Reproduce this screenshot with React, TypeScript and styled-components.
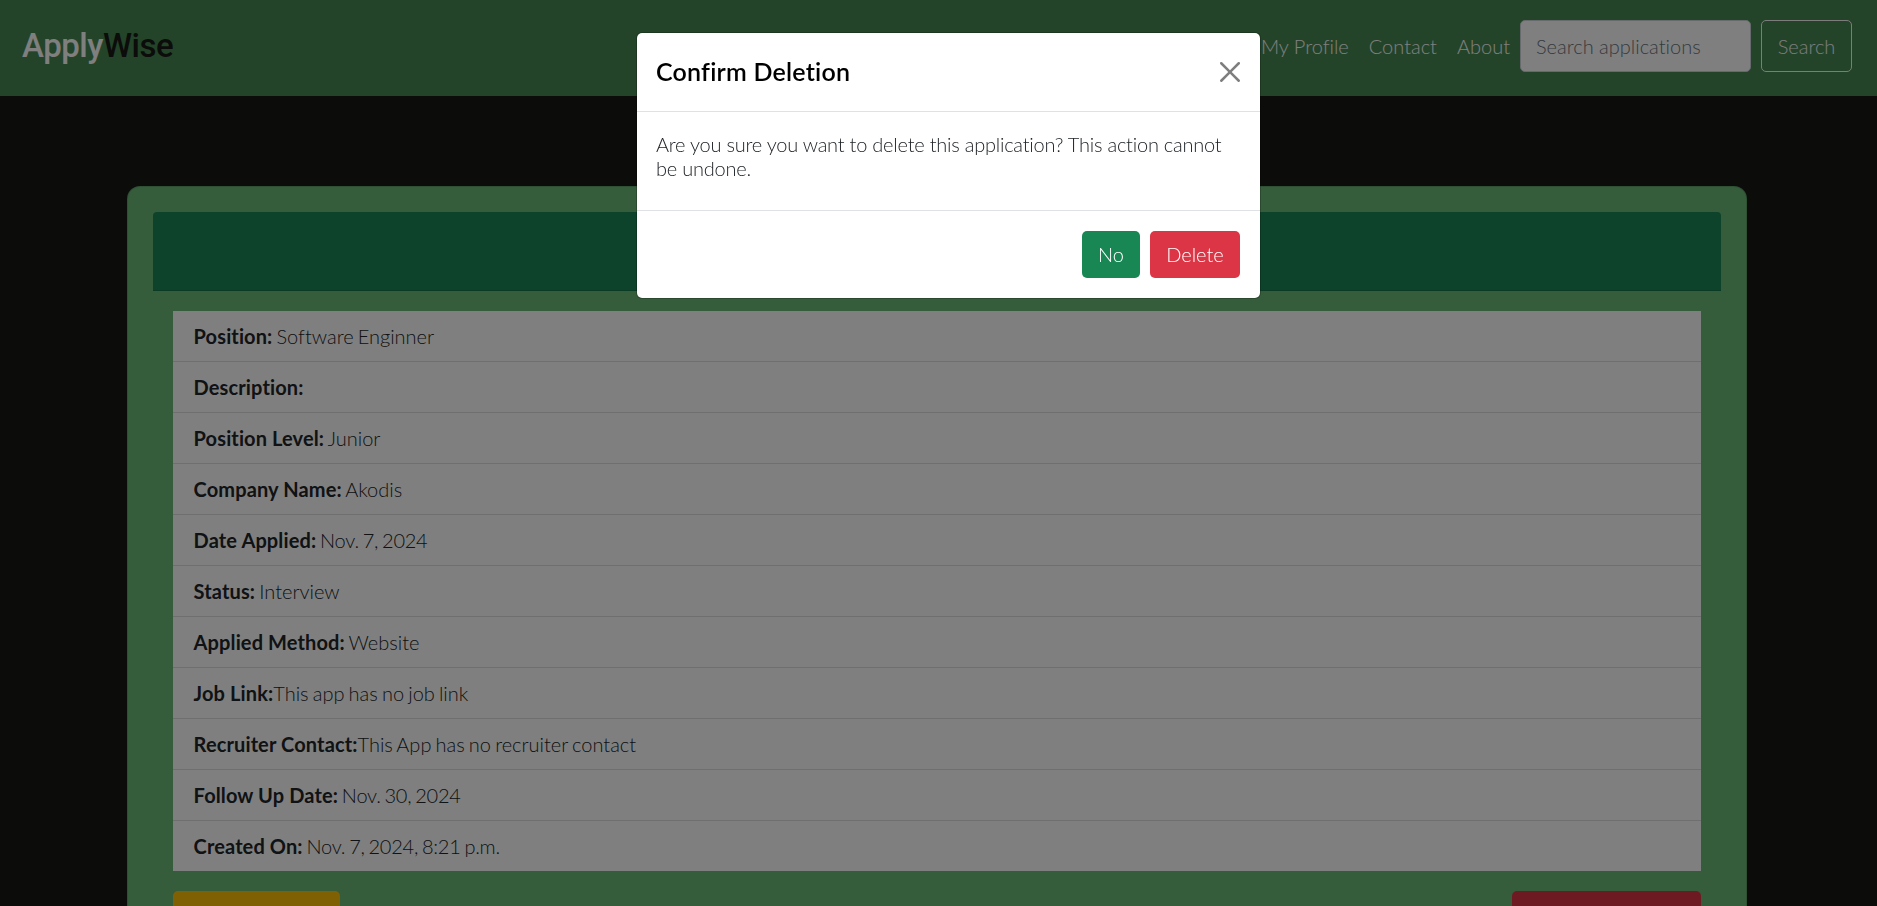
import React from 'react';
import styled, { createGlobalStyle } from 'styled-components';

const GlobalStyle = createGlobalStyle`
  *, *::before, *::after { box-sizing: border-box; }
  html, body { margin: 0; height: 100%; overflow: hidden; }
  body {
    background: #181815;
    color: #212529;
    font: 300 20px/1.5 Lato, "Open Sans", sans-serif;
    font-variant-ligatures: none;
  }
  button, input { font: inherit; margin: 0; }
`;

const Page = styled.div`
  height: 906px;
  overflow: hidden;
`;

const Navbar = styled.nav`
  display: flex;
  align-items: flex-start;
  justify-content: space-between;
  height: 96px;
  padding: 20px 25px 0 22px;
  background: #468852;
`;

const Brand = styled.a`
  display: block;
  font: 500 33px/52px Roboto, sans-serif;
  letter-spacing: -0.45px;
  color: #181815;
`;

const BrandLight = styled.span`
  color: #fff;
`;

const NavRight = styled.div`
  display: flex;
`;

const NavLink = styled.a`
  padding: 11px 10px 10px;
  color: #fff;
  white-space: nowrap;
`;

const SearchInput = styled.input`
  width: 231px;
  height: 52px;
  padding: 7px 15px;
  border: 1px solid #ced4da;
  border-radius: 5px;
  background: #fff;
  color: #212529;
  &::placeholder { color: #6c757d; opacity: 1; }
`;

const SearchButton = styled.button`
  width: 91px;
  height: 52px;
  margin-left: 10px;
  padding: 0;
  border: 1px solid #f8f9fa;
  border-radius: 5px;
  background: transparent;
  color: #f8f9fa;
`;

const Card = styled.main`
  width: 1620px;
  height: 800px;
  margin: 90px 0 0 127px;
  padding: 25px;
  border: 1px solid rgba(0, 0, 0, 0.125);
  border-radius: 13px;
  background: #6ab876;
`;

const CardHeader = styled.header`
  height: 79px;
  border-bottom: 1px solid rgba(0, 0, 0, 0.125);
  border-radius: 4px 4px 0 0;
  background: #198754;
`;

const CardBody = styled.div`
  padding: 20px;
`;

const DetailList = styled.ul`
  margin: 0 0 20px;
  padding: 0;
  list-style: none;
  background: #fff;
`;

const DetailRow = styled.li`
  height: 51px;
  padding: 10px 20.6px;
  border-bottom: 1px solid rgba(0, 0, 0, 0.125);
  white-space: pre;
  &:last-child { height: 50px; border-bottom: 0; }
`;

const Label = styled.strong`
  font-weight: 700;
  letter-spacing: 0.12px;
`;

const Value = styled.span<{ $numeric: boolean }>`
  letter-spacing: ${(p) => (p.$numeric ? '-0.25px' : '0')};
  word-spacing: -1.3px;
`;

const Actions = styled.div`
  display: flex;
  justify-content: space-between;
`;

const ActionButton = styled.button<{ $tone: string; $width: number }>`
  width: ${(p) => p.$width}px;
  height: 47px;
  border: 0;
  border-radius: 5px;
  background: ${(p) => p.$tone};
`;

const Backdrop = styled.div`
  position: fixed;
  inset: 0;
  background: rgba(0, 0, 0, 0.5);
`;

const Dialog = styled.section`
  position: absolute;
  top: 32px;
  left: 636px;
  width: 625px;
  border: 1px solid rgba(0, 0, 0, 0.2);
  border-radius: 6px;
  background: #fff;
  background-clip: padding-box;
  color: #000;
`;

const DialogHeader = styled.header`
  display: flex;
  align-items: center;
  justify-content: space-between;
  height: 79px;
  padding: 0 20px 0 19px;
  border-bottom: 1px solid #dee2e6;
`;

const DialogTitle = styled.h5`
  margin: 0;
  font-size: 25px;
  font-weight: 600;
  letter-spacing: 0.22px;
`;

const CloseButton = styled.button`
  display: flex;
  padding: 0;
  border: 0;
  background: transparent;
  opacity: 0.5;
`;

const DialogBody = styled.p`
  margin: 0;
  height: 98px;
  padding: 20px 20px 20px 19px;
  letter-spacing: -0.23px;
  line-height: 24px;
  color: #212529;
`;

const DialogFooter = styled.footer`
  display: flex;
  justify-content: flex-end;
  gap: 10px;
  height: 88px;
  padding: 20px;
  border-top: 1px solid #dee2e6;
`;

const DialogButton = styled.button<{ $tone: string; $width: number }>`
  width: ${(p) => p.$width}px;
  height: 47px;
  padding: 0 0 2px;
  border: 0;
  border-radius: 5px;
  background: ${(p) => p.$tone};
  color: #fff;
`;

const details: [string, string][] = [
  ['Position:', ' Software Enginner'],
  ['Description:', ''],
  ['Position Level:', ' Junior'],
  ['Company Name:', ' Akodis'],
  ['Date Applied:', ' Nov. 7, 2024'],
  ['Status:', ' Interview'],
  ['Applied Method:', ' Website'],
  ['Job Link:', 'This app has no job link'],
  ['Recruiter Contact:', 'This App has no recruiter contact'],
  ['Follow Up Date:', ' Nov. 30, 2024'],
  ['Created On:', ' Nov. 7, 2024, 8:21 p.m.'],
];

export default function App() {
  return (
    <>
      <GlobalStyle />
      <Page>
        <Navbar>
          <Brand><BrandLight>Apply</BrandLight>Wise</Brand>
          <NavRight>
            <NavLink>My Profile</NavLink>
            <NavLink>Contact</NavLink>
            <NavLink>About</NavLink>
            <SearchInput placeholder="Search applications" />
            <SearchButton>Search</SearchButton>
          </NavRight>
        </Navbar>
        <Card>
          <CardHeader />
          <CardBody>
            <DetailList>
              {details.map(([label, value]) => (
                <DetailRow key={label}>
                  <Label>{label}</Label>
                  <Value $numeric={/\d/.test(value)}>{value}</Value>
                </DetailRow>
              ))}
            </DetailList>
            <Actions>
              <ActionButton $tone="#ffc107" $width={167} />
              <ActionButton $tone="#dc3545" $width={189} />
            </Actions>
          </CardBody>
        </Card>
      </Page>
      <Backdrop />
      <Dialog role="dialog">
        <DialogHeader>
          <DialogTitle>Confirm Deletion</DialogTitle>
          <CloseButton>
            <svg width="20" height="20" viewBox="0 0 16 16" fill="#000">
              <path d="M.293.293a1 1 0 011.414 0L8 6.586 14.293.293a1 1 0 111.414 1.414L9.414 8l6.293 6.293a1 1 0 01-1.414 1.414L8 9.414l-6.293 6.293a1 1 0 01-1.414-1.414L6.586 8 .293 1.707a1 1 0 010-1.414z" />
            </svg>
          </CloseButton>
        </DialogHeader>
        <DialogBody>Are you sure you want to delete this application? This action cannot be undone.</DialogBody>
        <DialogFooter>
          <DialogButton $tone="#198754" $width={58}>No</DialogButton>
          <DialogButton $tone="#dc3545" $width={90}>Delete</DialogButton>
        </DialogFooter>
      </Dialog>
    </>
  );
}
